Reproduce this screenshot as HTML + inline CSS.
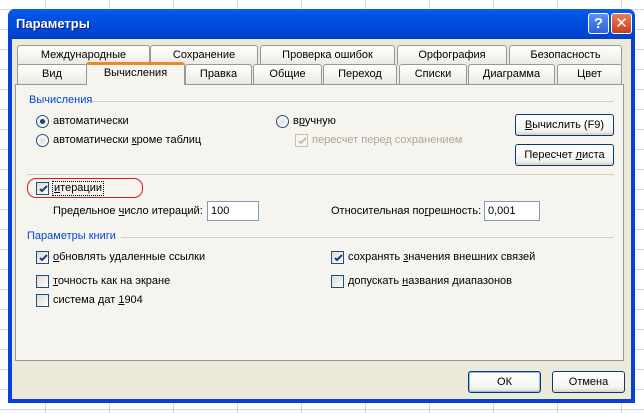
<!DOCTYPE html>
<html><head><meta charset="utf-8"><style>
*{box-sizing:border-box;margin:0;padding:0}
body{width:644px;height:413px;position:relative;overflow:hidden;background:#fff;font-family:"Liberation Sans","DejaVu Sans",sans-serif;font-size:11px;color:#000}
.a{position:absolute;white-space:nowrap}
.grid{position:absolute;inset:0;background-image:linear-gradient(90deg,#d0d7e5 1px,transparent 1px),linear-gradient(#d0d7e5 1px,transparent 1px);background-size:64px 100%,100% 20px;background-position:45px 0,0 9px}
.dlg{position:absolute;left:8px;top:9px;width:627px;height:394px;background:#0a3fd8;border-radius:7px 7px 0 0}
.title{position:absolute;left:0;top:0;width:627px;height:30px;border-radius:7px 7px 0 0;background:linear-gradient(#0a5fe6,#0055e5 20%,#0047d6 70%,#0040c8)}
.body{position:absolute;left:4px;top:30px;width:619px;height:360px;background:#ece9d8}
.tab{position:absolute;height:20px;background:linear-gradient(#fefefe,#f4f3ee 60%,#e9e8e0);border:1px solid #919b9c;border-bottom:none;border-radius:3px 3px 0 0;text-align:center;line-height:18px}
.panel{position:absolute;left:15px;top:84px;width:609px;height:277px;background:#f5f4ef;border:1px solid #919b9c}
.lbl{color:#0046d5}
.line{position:absolute;height:1px;background:#d0d0bf}
.rad{position:absolute;width:13px;height:13px;border-radius:50%;border:1px solid #1c5180;background:radial-gradient(#dcdad2,#fff 70%)}
.chk{position:absolute;width:13px;height:13px;border:1px solid #1c5180;background:linear-gradient(135deg,#dcdad2,#fff)}
.chk svg{position:absolute;left:1px;top:1px}
.btn{position:absolute;height:22px;border:1px solid #003c74;border-radius:3px;background:linear-gradient(#fff,#f3f3ee 80%,#d6d0c5);text-align:center;line-height:20px}
.inp{position:absolute;height:20px;border:1px solid #7f9db9;background:#fff;padding-left:3px;line-height:18px}
u{text-decoration:underline}
</style></head><body>
<div class="grid"></div>
<div class="dlg">
<div class="title"></div>
<div class="a" style="left:8px;top:7px;color:#fff;font-weight:bold;font-size:13px;text-shadow:1px 1px #0a1e80">Параметры</div>
<div class="a" style="left:580px;top:4px;width:21px;height:21px;border:1px solid #fff;border-radius:3px;background:linear-gradient(#5c8ff5,#2b63d9);color:#fff;font-weight:bold;font-size:15px;text-align:center;line-height:19px">?</div>
<div class="a" style="left:603px;top:4px;width:21px;height:21px;border:1px solid #fff;border-radius:3px;background:linear-gradient(#e87d5e,#c3411c);color:#fff;font-weight:bold;font-size:15px;text-align:center;line-height:19px">✕</div>
<div class="body"></div>
</div>
<div class="tab" style="left:17px;top:45px;width:133px">Международные</div>
<div class="tab" style="left:150px;top:45px;width:108px">Сохранение</div>
<div class="tab" style="left:260px;top:45px;width:135px">Проверка ошибок</div>
<div class="tab" style="left:397px;top:45px;width:110px">Орфография</div>
<div class="tab" style="left:509px;top:45px;width:113px">Безопасность</div>
<div class="panel"></div>
<div class="tab" style="left:17px;top:64px;width:70px">Вид</div>
<div class="tab" style="left:185px;top:64px;width:67px">Правка</div>
<div class="tab" style="left:253px;top:64px;width:69px">Общие</div>
<div class="tab" style="left:323px;top:64px;width:74px">Переход</div>
<div class="tab" style="left:399px;top:64px;width:68px">Списки</div>
<div class="tab" style="left:468px;top:64px;width:87px">Диаграмма</div>
<div class="tab" style="left:557px;top:64px;width:65px">Цвет</div>
<div class="tab" style="left:86px;top:62px;width:99px;height:23px;background:#f5f4ef;border-top:3px solid #e68b2c;line-height:17px">Вычисления</div>

<div class="a lbl" style="left:29px;top:94px">Вычисления</div>
<div class="line" style="left:92px;top:101px;width:522px"></div>
<div class="rad" style="left:36px;top:115px"><div style="position:absolute;left:3px;top:3px;width:5px;height:5px;border-radius:50%;background:#21a121;background:#1e3f74"></div></div>
<div class="a" style="left:53px;top:115px">автоматически</div>
<div class="rad" style="left:36px;top:134px"></div>
<div class="a" style="left:53px;top:134px">автоматически <u>к</u>роме таблиц</div>
<div class="rad" style="left:276px;top:115px"></div>
<div class="a" style="left:293px;top:115px">в<u>р</u>учную</div>
<div class="chk" style="left:295px;top:134px;border-color:#c5c2b2;background:#f5f4ef"><svg width="11" height="11"><path d="M2 5l2 2 5-5" stroke="#c5c2b2" stroke-width="2" fill="none"/></svg></div>
<div class="a" style="left:312px;top:134px;color:#aca899">пересчет перед сохранением</div>
<div class="btn" style="left:515px;top:114px;width:99px"><u>В</u>ычислить (F9)</div>
<div class="btn" style="left:515px;top:144px;width:99px">Пересчет <u>л</u>иста</div>
<div class="line" style="left:27px;top:174px;width:587px"></div>
<div class="a" style="left:27px;top:178px;width:116px;height:20px;border:1px solid #e4141b;border-radius:9px"></div>
<div class="chk" style="left:36px;top:182px"><svg width="11" height="11"><path d="M2 5l2 2 5-5" stroke="#21a121" stroke-width="2" fill="none" style="stroke:#1e3f74"/></svg></div>
<div class="a" style="left:52px;top:181px;border:1px dotted #000;padding:0 1px;line-height:13px"><u>и</u>терации</div>
<div class="a" style="left:53px;top:205px">Предельное <u>ч</u>исло итераций:</div>
<div class="inp" style="left:207px;top:201px;width:52px">100</div>
<div class="a" style="left:331px;top:205px">Относительная по<u>г</u>решность:</div>
<div class="inp" style="left:484px;top:201px;width:56px">0,001</div>
<div class="a lbl" style="left:27px;top:230px">Параметры книги</div>
<div class="line" style="left:121px;top:237px;width:493px"></div>
<div class="chk" style="left:36px;top:251px"><svg width="11" height="11"><path d="M2 5l2 2 5-5" stroke="#1e3f74" stroke-width="2" fill="none"/></svg></div>
<div class="a" style="left:53px;top:251px"><u>о</u>бновлять удаленные ссылки</div>
<div class="chk" style="left:36px;top:275px"></div>
<div class="a" style="left:53px;top:275px"><u>т</u>очность как на экране</div>
<div class="chk" style="left:36px;top:294px"></div>
<div class="a" style="left:53px;top:294px">система дат <u>1</u>904</div>
<div class="chk" style="left:331px;top:251px"><svg width="11" height="11"><path d="M2 5l2 2 5-5" stroke="#1e3f74" stroke-width="2" fill="none"/></svg></div>
<div class="a" style="left:348px;top:251px">сохранять <u>з</u>начения внешних связей</div>
<div class="chk" style="left:331px;top:275px"></div>
<div class="a" style="left:348px;top:275px">допускать <u>н</u>азвания диапазонов</div>
<div class="btn" style="left:468px;top:371px;width:73px;border-color:#003c74;box-shadow:inset 0 0 0 1px #98b8ea">ОК</div>
<div class="btn" style="left:552px;top:371px;width:73px">Отмена</div>
</body></html>
